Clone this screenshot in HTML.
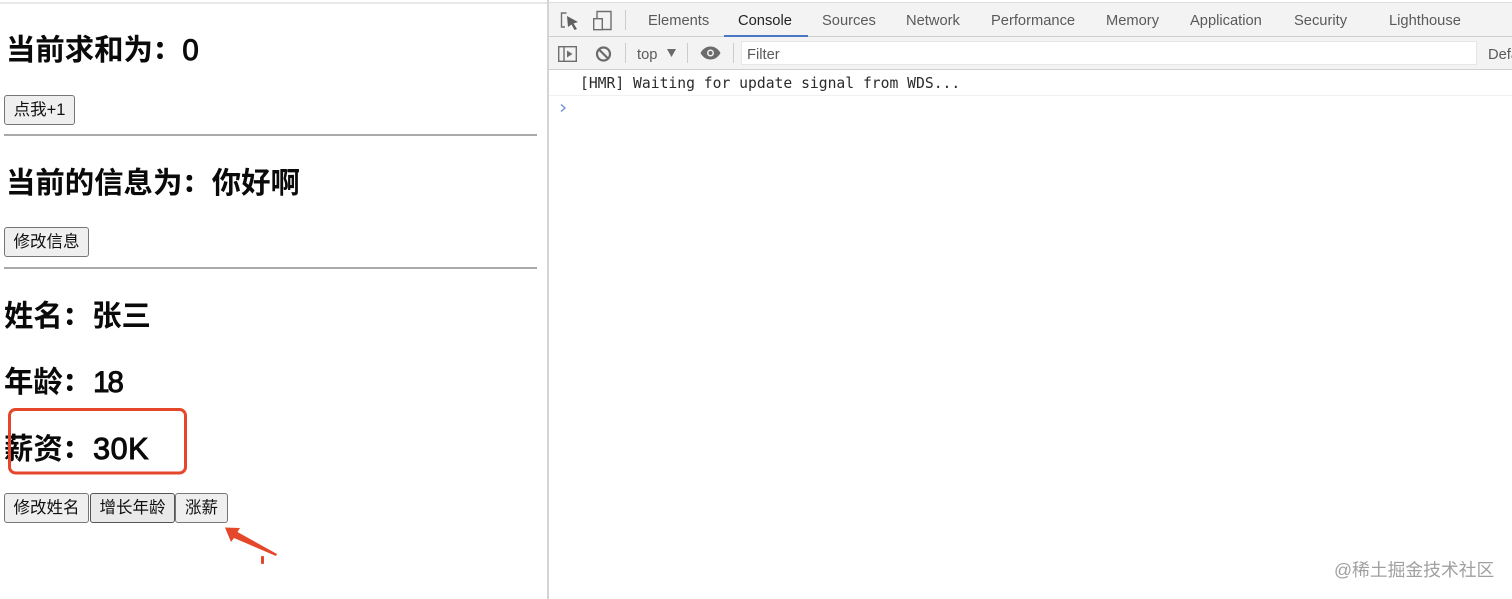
<!DOCTYPE html>
<html lang="zh"><head><meta charset="utf-8"><style>
html,body{margin:0;padding:0;background:#fff}
body{width:1512px;height:599px;position:relative;overflow:hidden;font-family:"Liberation Sans","Noto Sans CJK SC",sans-serif;color:#000}
.a{position:absolute;white-space:nowrap}
.h{font-size:29.4px;font-weight:700;line-height:36px;color:#0a0a0a}
.c{display:inline-block;width:29.4px;font-size:24px;line-height:20px;position:relative;top:-2px;text-indent:1px;-webkit-text-stroke:1.2px #0a0a0a}
.l{font-weight:400;-webkit-text-stroke:1px #0a0a0a}
.b{position:absolute;box-sizing:border-box;height:30px;background:#efefef;border:1px solid #767676;border-radius:3px;font-size:16.5px;line-height:29px;text-align:center;white-space:nowrap;color:#111}
.hr{position:absolute;left:4px;width:533px;height:2px;background:#a9a9a9}
.t{position:absolute;top:12px;font-size:14.7px;line-height:18px;color:#5a5a5a;white-space:nowrap}
.g{position:absolute;width:1px;background:#ccc}
</style></head><body>
<div class="a" style="left:0;top:2px;width:548px;height:2px;background:#e8e8e8"></div>

<div class="a h" style="left:6px;top:33px">当前求和为<span class="c">：</span><span class="l">0</span></div>
<div class="b" style="left:4px;top:95px;width:71px">点我+1</div>
<div class="hr" style="top:134px"></div>
<div class="a h" style="left:6px;top:166px">当前的信息为<span class="c">：</span>你好啊</div>
<div class="b" style="left:4px;top:227px;width:85px">修改信息</div>
<div class="hr" style="top:267px"></div>
<div class="a h" style="left:4px;top:299px">姓名<span class="c">：</span>张三</div>
<div class="a h" style="left:4px;top:365px">年龄<span class="c">：</span><span class="l" style="letter-spacing:-2px;margin-left:1px">18</span></div>
<div class="a h" style="left:4px;top:431px">薪资<span class="c">：</span><span class="l" style="font-size:30.5px;letter-spacing:.5px;margin-left:1px">30K</span></div>
<div class="b" style="left:4px;top:493px;width:85px">修改姓名</div>
<div class="b" style="left:90px;top:493px;width:85px;background:#e9e9e9;border-color:#555">增长年龄</div>
<div class="b" style="left:175px;top:493px;width:53px">涨薪</div>

<svg class="a" style="left:0;top:400px" width="300" height="180" viewBox="0 0 300 180" fill="none">
<rect x="9.500" y="9.500" width="176" height="63.500" rx="6" stroke="#e5472b" stroke-width="3"/>
<path d="M225 127.500 L240 128 L237.500 132 L277 154 L276 156 L234 138 L231 142 Z" fill="#e5472b"/>
<rect x="261" y="156" width="3" height="8" rx="1" fill="#e5472b"/>
</svg>

<div class="a" style="left:547px;top:0;width:2px;height:599px;background:#d4d4d4"></div>
<div class="a" style="left:549px;top:3px;width:963px;height:33px;background:#f3f3f3"></div>
<div class="a" style="left:549px;top:36px;width:963px;height:1px;background:#cfcfcf"></div>
<div class="a" style="left:549px;top:37px;width:963px;height:32px;background:#f3f3f3"></div>
<div class="a" style="left:549px;top:69px;width:963px;height:1px;background:#d0d0d0"></div>
<div class="a" style="left:549px;top:2px;width:963px;height:1px;background:#ddd"></div>

<svg class="a" style="left:558px;top:9px" width="56" height="24" viewBox="0 0 56 24" fill="none">
<path d="M8.500 4H3.500V18H7" stroke="#6e6e6e" stroke-width="1.400"/>
<path d="M9 7L20 13L15.500 14.500L19 20L16.500 21L13.500 15.500L10 18Z" fill="#5f5f5f"/>
<path d="M39 9V2.500H53V20.500H45" stroke="#6e6e6e" stroke-width="1.400"/>
<rect x="35.700" y="9.700" width="8.600" height="11" stroke="#6e6e6e" stroke-width="1.400"/>
</svg>
<div class="g" style="left:625px;top:10px;height:20px"></div>
<div class="t" style="left:648px">Elements</div>
<div class="t" style="left:738px;color:#222">Console</div>
<div class="a" style="left:724px;top:35px;width:84px;height:2px;background:#4a78c2"></div>
<div class="t" style="left:822px">Sources</div>
<div class="t" style="left:906px">Network</div>
<div class="t" style="left:991px">Performance</div>
<div class="t" style="left:1106px">Memory</div>
<div class="t" style="left:1190px">Application</div>
<div class="t" style="left:1294px">Security</div>
<div class="t" style="left:1389px">Lighthouse</div>

<svg class="a" style="left:556px;top:43px" width="60" height="22" viewBox="0 0 60 22" fill="none">
<rect x="2.700" y="3.700" width="17.600" height="14.600" stroke="#6e6e6e" stroke-width="1.400"/>
<path d="M8 4V18" stroke="#6e6e6e" stroke-width="1.400"/>
<path d="M11 7.500L16.500 11L11 14.500Z" fill="#6e6e6e"/>
<circle cx="47.500" cy="11" r="6.500" stroke="#6b6b6b" stroke-width="2.200"/>
<path d="M43 6.500L52 15.500" stroke="#6b6b6b" stroke-width="2.200"/>
</svg>
<div class="g" style="left:625px;top:43px;height:20px"></div>
<div class="t" style="left:637px;top:46px">top</div>
<svg class="a" style="left:666px;top:48px" width="11" height="10" viewBox="0 0 11 10"><path d="M1 1H10L5.500 9Z" fill="#6a6a6a"/></svg>
<div class="g" style="left:687px;top:43px;height:20px"></div>
<svg class="a" style="left:700px;top:45px" width="21" height="16" viewBox="0 0 21 16"><path fill-rule="evenodd" d="M.5 8C3 3.500 6.500 1.500 10.500 1.500S18 3.500 20.500 8C18 12.500 14.500 14.500 10.500 14.500S3 12.500 .5 8ZM10.500 4.500A3.500 3.500 0 1 0 10.500 11.500A3.500 3.500 0 1 0 10.500 4.500Z" fill="#6b6b6b"/><circle cx="10.500" cy="8" r="2" fill="#6b6b6b"/></svg>
<div class="g" style="left:733px;top:43px;height:20px"></div>
<div class="a" style="left:741px;top:41px;width:736px;height:24px;background:#fff;box-sizing:border-box;border:1px solid #e6e6e6"></div>
<div class="t" style="left:747px;top:46px">Filter</div>
<div class="t" style="left:1488px;top:46px">Default levels</div>

<div class="a" style="left:580px;top:75px;font:14.7px/18px 'DejaVu Sans Mono','Liberation Mono',monospace;color:#2b2b2b">[HMR] Waiting for update signal from WDS...</div>
<div class="a" style="left:549px;top:95px;width:963px;height:1px;background:#f1f1f1"></div>
<svg class="a" style="left:559px;top:103px" width="9" height="10" viewBox="0 0 9 10" fill="none"><path d="M2 1.500L6 5L2 8.500" stroke="#6f93d8" stroke-width="1.400"/></svg>

<div class="a" style="left:1334px;top:559px;font-size:17.8px;line-height:22px;color:#a0a0a0">@稀土掘金技术社区</div>
</body></html>
